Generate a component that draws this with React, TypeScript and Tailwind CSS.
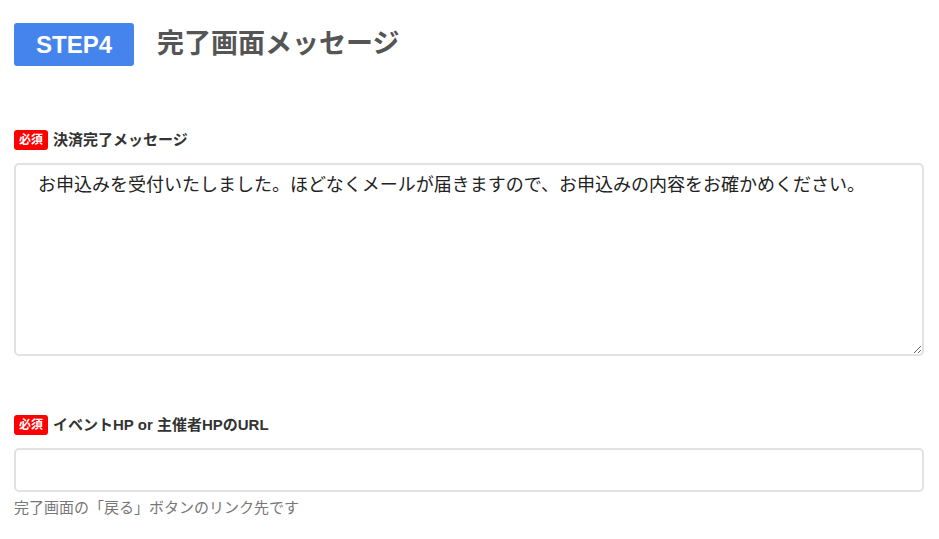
import React from "react";

const jp = { fontFamily: '"Liberation Sans", "Noto Sans CJK JP", sans-serif' };

function Required() {
  return (
    <span className="inline-flex h-[20px] w-[34px] items-center justify-center rounded-[3px] bg-[#ff0000] text-[12px] font-bold leading-none text-white">
      必須
    </span>
  );
}

export default function App() {
  return (
    <div className="min-h-[539px] bg-white pl-[14px] pr-[15px]" style={jp}>
      <div className="flex items-center pt-[23px]">
        <div className="flex h-[43px] w-[120px] items-center justify-center rounded-[3px] bg-[#4584ec] text-[24px] font-bold text-white">
          STEP4
        </div>
        <h1 className="ml-[23px] text-[27px] font-bold leading-none text-[#555555]">完了画面メッセージ</h1>
      </div>

      <div className="mt-[63px] flex items-center gap-[5px]">
        <Required />
        <span className="text-[15px] font-bold text-[#333333]">決済完了メッセージ</span>
      </div>
      <textarea
        className="mt-[11px] block h-[193px] w-full resize-y rounded-[5px] border-2 border-[#e2e2e2] px-[22px] pt-[7px] text-[18px] leading-[26px] text-[#222222] outline-none"
        style={jp}
        defaultValue="お申込みを受付いたしました。ほどなくメールが届きますので、お申込みの内容をお確かめください。"
      />

      <div className="mt-[58px] flex items-center gap-[5px]">
        <Required />
        <span className="text-[15px] font-bold text-[#333333]">イベントHP or 主催者HPのURL</span>
      </div>
      <input
        type="text"
        className="mt-[12px] block h-[44px] w-full rounded-[5px] border-2 border-[#e2e2e2] px-[12px] text-[16px] outline-none"
        style={jp}
      />
      <p className="mt-[6px] text-[15px] leading-[20px] text-[#777777]">完了画面の「戻る」ボタンのリンク先です</p>
    </div>
  );
}
